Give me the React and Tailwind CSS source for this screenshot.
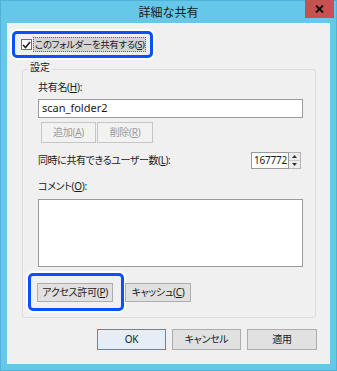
import React from "react";

const jp =
  "font-['Noto_Sans','Noto_Sans_CJK_JP',sans-serif] [font-feature-settings:'palt'] whitespace-nowrap";

const Btn = ({ children, className = "", disabled = false }) => (
  <div
    className={`flex items-center justify-center border text-[10px] tracking-[-0.3px] ${
      disabled
        ? "border-[#c6c6c6] bg-[#f2f2f2] text-[#9a9a9a]"
        : "border-[#adadad] bg-[#e1e1e1] text-[#1a1a1a]"
    } ${className}`}
  >
    {children}
  </div>
);

const App = () => {
  return (
    <div
      className={`w-[337px] h-[371px] bg-[#66c8e9] border border-[#4fb2d9] flex flex-col ${jp}`}
    >
      {/* title bar */}
      <div className="relative h-[22px] shrink-0 flex items-center justify-center">
        <span className="text-[12px] text-[#1a1a1a] mt-[1px]">詳細な共有</span>
        <div className="absolute right-[2px] -top-[1px] w-[29px] h-[18px] bg-[#c75050] flex items-center justify-center">
          <svg width="9" height="8" viewBox="0 0 9 8">
            <path d="M1 0.5 L8 7.5 M8 0.5 L1 7.5" stroke="#111" strokeWidth="2" />
          </svg>
        </div>
      </div>

      {/* body */}
      <div className="mx-[6px] mb-[6px] flex-1 bg-[#f0f0f0] border-t border-l border-[#f8f8f8] flex flex-col">
        {/* share checkbox */}
        <div className="pt-[7px] pl-[4px] flex">
          <div className="h-[27px] border-[3px] border-[#0a50ff] rounded-[5px] shadow-[0_0_0_2px_#ffffff] flex items-center pl-[6px] pr-[4px]">
            <div className="w-[11px] h-[11px] shrink-0 border border-[#707070] bg-white flex items-center justify-center">
              <svg width="9" height="8" viewBox="0 0 9 8">
                <path d="M1 4 L3.5 6.5 L8 1" fill="none" stroke="#222" strokeWidth="1.6" />
              </svg>
            </div>
            <span className="ml-[1px] px-[1px] bg-[#d4d4d4] border border-dotted border-[#666] text-[9.5px] tracking-[-0.4px] leading-[13px] text-[#1a1a1a]">
              このフォルダーを共有する(<u>S</u>)
            </span>
          </div>
        </div>

        {/* settings group */}
        <div className="relative mt-[11px] mx-[14px] h-[249px] border border-[#dcdcdc] rounded-[3px] px-[15px]">
          <span className="absolute -top-[10px] left-[5px] px-[2px] bg-[#f0f0f0] text-[10px] text-[#1a1a1a]">
            設定
          </span>

          <div className="pt-[10px] text-[10px] tracking-[-0.3px] leading-[14px] text-[#1a1a1a]">
            共有名(<u>H</u>):
          </div>
          <div className="mt-[5px] h-[19px] w-[265px] bg-white border border-[#9a9a9a] flex items-center pl-[3px] text-[11px] text-[#1a1a1a]">
            scan_folder2
          </div>
          <div className="mt-[4px] ml-[3px] flex gap-[1px]">
            <Btn disabled className="w-[55px] h-[21px]">
              追加(<u>A</u>)
            </Btn>
            <Btn disabled className="w-[56px] h-[21px]">
              削除(<u>R</u>)
            </Btn>
          </div>

          <div className="mt-[9px] flex items-center justify-between w-[263px]">
            <span className="text-[10px] tracking-[-0.4px] text-[#1a1a1a]">
              同時に共有できるユーザー数(<u>L</u>):
            </span>
            <div className="flex h-[17px]">
              <div className="w-[38px] bg-white border border-[#9a9a9a] flex items-center pl-[2px] text-[10px] tracking-[-0.2px] text-[#1a1a1a]">
                167772
              </div>
              <div className="w-[12px] flex flex-col border border-l-0 border-[#b5b5b5] bg-[#ececec]">
                <div className="flex-1 flex items-center justify-center border-b border-[#c8c8c8]">
                  <svg width="5" height="3" viewBox="0 0 5 3">
                    <path d="M0 3 L2.5 0 L5 3 Z" fill="#333" />
                  </svg>
                </div>
                <div className="flex-1 flex items-center justify-center">
                  <svg width="5" height="3" viewBox="0 0 5 3">
                    <path d="M0 0 L2.5 3 L5 0 Z" fill="#333" />
                  </svg>
                </div>
              </div>
            </div>
          </div>

          <div className="mt-[10px] text-[10px] tracking-[-0.3px] leading-[14px] text-[#1a1a1a]">
            コメント(<u>O</u>):
          </div>
          <div className="mt-[6px] h-[68px] w-[265px] bg-white border border-[#9a9a9a]" />

          <div className="mt-[6px] -ml-[10px] flex items-center">
            <div className="w-[96px] h-[38px] border-[3px] border-[#0a50ff] rounded-[5px] shadow-[0_0_0_2px_#ffffff] flex items-center pl-[6px]">
              <Btn className="w-[76px] h-[19px]">
                アクセス許可(<u>P</u>)
              </Btn>
            </div>
            <Btn className="ml-[1px] w-[66px] h-[19px]">
              キャッシュ(<u>C</u>)
            </Btn>
          </div>
        </div>

        {/* dialog buttons */}
        <div className="mt-[11px] mr-[13px] flex justify-end gap-[6px]">
          <Btn className="w-[69px] h-[21px] !border-[#3c8fd8] !bg-[#e5eef6]">OK</Btn>
          <Btn className="w-[69px] h-[21px]">キャンセル</Btn>
          <Btn className="w-[70px] h-[21px]">適用</Btn>
        </div>
      </div>
    </div>
  );
};

export default App;
